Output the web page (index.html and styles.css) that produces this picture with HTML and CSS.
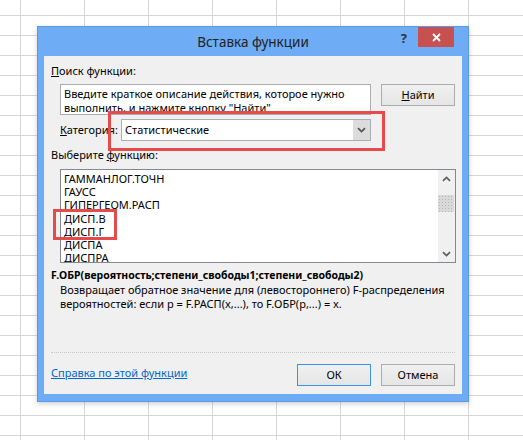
FILE: index.html
```html
<!DOCTYPE html>
<html lang="ru">
<head>
<meta charset="utf-8">
<title>Вставка функции</title>
<link rel="stylesheet" href="styles.css">
</head>
<body>
<div class="dialog">
  <div class="titlebar">
    <div class="tb-spacer"></div>
    <div class="title">Вставка функции</div>
    <div class="tb-controls">
      <span class="help">?</span>
      <span class="close"><svg width="9" height="9" viewBox="0 0 9 9"><path d="M1 1 L8 8 M8 1 L1 8" stroke="#fff" stroke-width="1.8" fill="none"/></svg></span>
    </div>
  </div>
  <div class="content">
    <div class="label"><u>П</u>оиск функции:</div>
    <div class="search-row">
      <div class="textarea">Введите краткое описание действия, которое нужно выполнить, и нажмите кнопку "Найти"</div>
      <div class="btn"><u>Н</u>айти</div>
    </div>
    <div class="cat-row">
      <div class="cat-label"><u>К</u>атегория:</div>
      <div class="combo">
        <span class="combo-text">Статистические</span>
        <span class="combo-btn"><svg width="9" height="6" viewBox="0 0 9 6"><path d="M1 1.2 L4.5 4.6 L8 1.2" stroke="#555" stroke-width="1.8" fill="none"/></svg></span>
      </div>
      <div class="mark mark-cat"></div>
    </div>
    <div class="label label-fn">Выберите <u>ф</u>ункцию:</div>
    <div class="list">
      <div class="items">
        <div>ГАММАНЛОГ.ТОЧН</div>
        <div>ГАУСС</div>
        <div>ГИПЕРГЕОМ.РАСП</div>
        <div>ДИСП.В</div>
        <div>ДИСП.Г</div>
        <div>ДИСПА</div>
        <div>ДИСПРА</div>
      </div>
      <div class="scrollbar">
        <span class="sb-btn"><svg width="9" height="6" viewBox="0 0 9 6"><path d="M1 4.8 L4.5 1.4 L8 4.8" stroke="#606060" stroke-width="1.8" fill="none"/></svg></span>
        <span class="sb-thumb"></span>
        <span class="sb-track"></span>
        <span class="sb-btn"><svg width="9" height="6" viewBox="0 0 9 6"><path d="M1 1.2 L4.5 4.6 L8 1.2" stroke="#606060" stroke-width="1.8" fill="none"/></svg></span>
      </div>
      <div class="mark mark-list"></div>
    </div>
    <div class="sig">F.ОБР(вероятность;степени_свободы1;степени_свободы2)</div>
    <div class="desc">Возвращает обратное значение для (левостороннего) F-распределения<br>вероятностей: если p = F.РАСП(x,...), то F.ОБР(p,...) = x.</div>
    <div class="separator"></div>
    <div class="footer">
      <a class="link" href="#">Справка по этой функции</a>
      <div class="footer-btns">
        <div class="btn btn-default">ОК</div>
        <div class="btn">Отмена</div>
      </div>
    </div>
  </div>
</div>
</body>
</html>
```
FILE: styles.css
```css
html, body {
  margin: 0;
}
body {
  width: 523px;
  height: 440px;
  box-sizing: border-box;
  padding: 26px 0 0 37px;
  overflow: hidden;
  background-color: #fff;
  background-image:
    linear-gradient(to right, #d6d6d6 1px, transparent 1px),
    linear-gradient(to bottom, #d6d6d6 1px, transparent 1px);
  background-size: 64px 20px, 64px 20px;
  background-position: 20px 0, 0 15px;
  font-family: "Noto Sans", "Open Sans", sans-serif;
}
.dialog {
  width: 432px;
  height: 376px;
  box-sizing: border-box;
  border: 1px solid #5a9ae4;
  background: #6eacf5;
  padding: 0 6px 7px;
  box-shadow: 0 2px 5px rgba(0, 0, 0, 0.18);
}
.titlebar {
  height: 29px;
  display: grid;
  grid-template-columns: 1fr auto 1fr;
}
.title {
  font-size: 13.5px;
  line-height: 29px;
  color: #222;
  padding-top: 1px;
}
.tb-controls {
  display: flex;
  justify-content: flex-end;
  align-items: flex-start;
  padding-right: 8px;
}
.help {
  font-size: 13px;
  font-weight: bold;
  color: #333;
  line-height: 20px;
  margin-top: 1px;
  margin-right: 11px;
}
.close {
  width: 36px;
  height: 20px;
  background: #c75050;
  display: flex;
  align-items: center;
  justify-content: center;
}
.content {
  height: 338px;
  box-sizing: border-box;
  background: #f0f0f0;
  padding: 7px 7px 0;
  font-size: 11px;
  color: #000;
}
.label {
  line-height: 16px;
}
.search-row {
  display: flex;
  gap: 10px;
  margin-top: 5px;
  padding-left: 9px;
}
.textarea {
  width: 311px;
  height: 31px;
  box-sizing: border-box;
  border: 1px solid #abadb3;
  background: #fff;
  padding: 2px 3px 0;
  line-height: 14px;
  overflow: hidden;
}
.btn {
  width: 74px;
  height: 22px;
  box-sizing: border-box;
  border: 1px solid #acacac;
  background: linear-gradient(#f0f0f0, #e5e5e5);
  display: flex;
  align-items: center;
  justify-content: center;
  line-height: 16px;
}
.btn-default {
  border-color: #3c93e4;
}
.cat-row {
  display: flex;
  align-items: center;
  margin-top: 4px;
  padding-left: 9px;
  position: relative;
}
.cat-label {
  width: 61px;
  line-height: 16px;
}
.combo {
  width: 250px;
  height: 22px;
  box-sizing: border-box;
  border: 1px solid #abadb3;
  background: #fff;
  display: flex;
}
.combo-text {
  flex: 1;
  padding-left: 3px;
  line-height: 20px;
}
.combo-btn {
  width: 17px;
  background: #dcdcdc;
  display: flex;
  align-items: center;
  justify-content: center;
}
.mark {
  position: absolute;
  border: 3px solid #e64a4a;
  box-sizing: border-box;
}
.mark-cat {
  left: 57px;
  top: -8px;
  width: 277px;
  height: 40px;
}
.label-fn {
  margin-top: 6px;
}
.list {
  margin: 6px 0 0 9px;
  width: 396px;
  height: 94px;
  box-sizing: border-box;
  border: 1px solid #828790;
  background: #fff;
  display: flex;
  position: relative;
}
.items {
  flex: 1;
  padding: 2px 3px 0;
  line-height: 13.2px;
  overflow: hidden;
}
.scrollbar {
  width: 17px;
  background: #f0f0f0;
  display: flex;
  flex-direction: column;
}
.sb-btn {
  height: 17px;
  display: flex;
  align-items: center;
  justify-content: center;
}
.sb-thumb {
  height: 17px;
  margin: 8px 1px 0 0;
  background-color: #d9d9d9;
  background-image: radial-gradient(circle, #b8b8b8 0.8px, transparent 1px);
  background-size: 3px 3px;
}
.sb-track {
  flex: 1;
}
.mark-list {
  left: -8px;
  top: 39px;
  width: 64px;
  height: 31px;
}
.sig {
  margin-top: 4px;
  font-weight: bold;
  font-size: 10.5px;
  line-height: 16px;
}
.desc {
  padding-left: 9px;
  line-height: 14px;
  white-space: nowrap;
}
.separator {
  margin-top: 41px;
  border-top: 1px dotted #c8c8c8;
}
.footer {
  display: flex;
  align-items: center;
  justify-content: space-between;
  margin-top: 11px;
}
.link {
  color: #0066cc;
  text-decoration: underline;
  line-height: 16px;
  margin-top: -4px;
}
.footer-btns {
  display: flex;
  gap: 10px;
}
```
